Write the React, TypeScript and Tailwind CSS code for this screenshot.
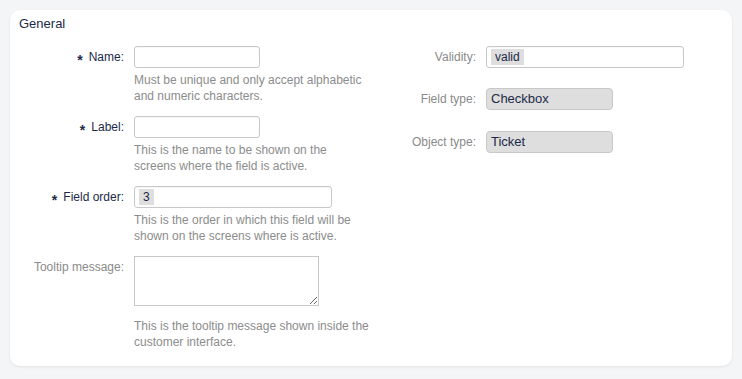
const navy = "text-[#1c2a48]";

const Req = () => (
  <span className={`${navy} mr-[6px] inline-block translate-y-[3px] text-[14px] font-bold leading-none`}>*</span>
);

type RowProps = {
  label: string;
  required?: boolean;
  children: React.ReactNode;
  help?: React.ReactNode;
  helpGap?: string;
};

const LeftRow = ({ label, required, children, help, helpGap = "mt-[4px]" }: RowProps) => (
  <div className="flex gap-[10px]">
    <div className="flex h-[22px] w-[114px] shrink-0 items-center justify-end">
      {required && <Req />}
      <span className={required ? navy : "text-[#8a8a8a]"}>{label}:</span>
    </div>
    <div className="flex flex-col">
      {children}
      {help && <p className={`${helpGap} w-[236px] leading-[16px] text-[#8c8c8c]`}>{help}</p>}
    </div>
  </div>
);

const TextInput = ({ w, tag }: { w: string; tag?: string }) => (
  <div className={`${w} flex h-[22px] items-center rounded-[3px] border border-[#c8c8c8] bg-white px-[4px] shadow-[inset_0_1px_1px_rgba(0,0,0,0.04)]`}>
    {tag && <span className={`${navy} bg-[#dedede] px-[4px] leading-[16px]`}>{tag}</span>}
  </div>
);

const RightRow = ({ label, children, className = "" }: { label: string; children: React.ReactNode; className?: string }) => (
  <div className={`flex gap-[10px] ${className}`}>
    <div className="flex h-[22px] w-[114px] shrink-0 items-center justify-end text-[#8a8a8a]">{label}:</div>
    {children}
  </div>
);

const ReadOnly = ({ value }: { value: string }) => (
  <div className={`${navy} flex h-[22px] w-[127px] items-center rounded-[4px] border border-[#c8c8c8] bg-[#dedede] px-[4px] text-[13px]`}>
    {value}
  </div>
);

export default function App() {
  return (
    <div className="min-h-[379px] bg-[#f4f5f7] p-[10px] text-[12px] font-['Liberation_Sans',Arial,sans-serif]">
      <div className="h-[356px] w-[722px] rounded-[10px] bg-white shadow-[0_1px_3px_rgba(0,0,0,0.08)]">
        <h2 className={`${navy} px-[9px] pt-[6px] text-[13px] leading-[16px]`}>General</h2>
        <div className="mt-[14px] flex">
          <div className="flex w-[352px] flex-col gap-[12px]">
            <LeftRow label="Name" required help="Must be unique and only accept alphabetic and numeric characters.">
              <TextInput w="w-[126px]" />
            </LeftRow>
            <LeftRow label="Label" required help="This is the name to be shown on the screens where the field is active.">
              <TextInput w="w-[126px]" />
            </LeftRow>
            <LeftRow label="Field order" required help="This is the order in which this field will be shown on the screens where is active.">
              <TextInput w="w-[198px]" tag="3" />
            </LeftRow>
            <LeftRow
              label="Tooltip message"
              helpGap="mt-[12px]"
              help="This is the tooltip message shown inside the customer interface."
            >
              <textarea className="block h-[50px] w-[185px] resize border border-[#c8c8c8] bg-white outline-none" />
            </LeftRow>
          </div>
          <div className="flex flex-col">
            <RightRow label="Validity">
              <TextInput w="w-[198px]" tag="valid" />
            </RightRow>
            <RightRow label="Field type" className="mt-[20px]">
              <ReadOnly value="Checkbox" />
            </RightRow>
            <RightRow label="Object type" className="mt-[21px]">
              <ReadOnly value="Ticket" />
            </RightRow>
          </div>
        </div>
      </div>
    </div>
  );
}
